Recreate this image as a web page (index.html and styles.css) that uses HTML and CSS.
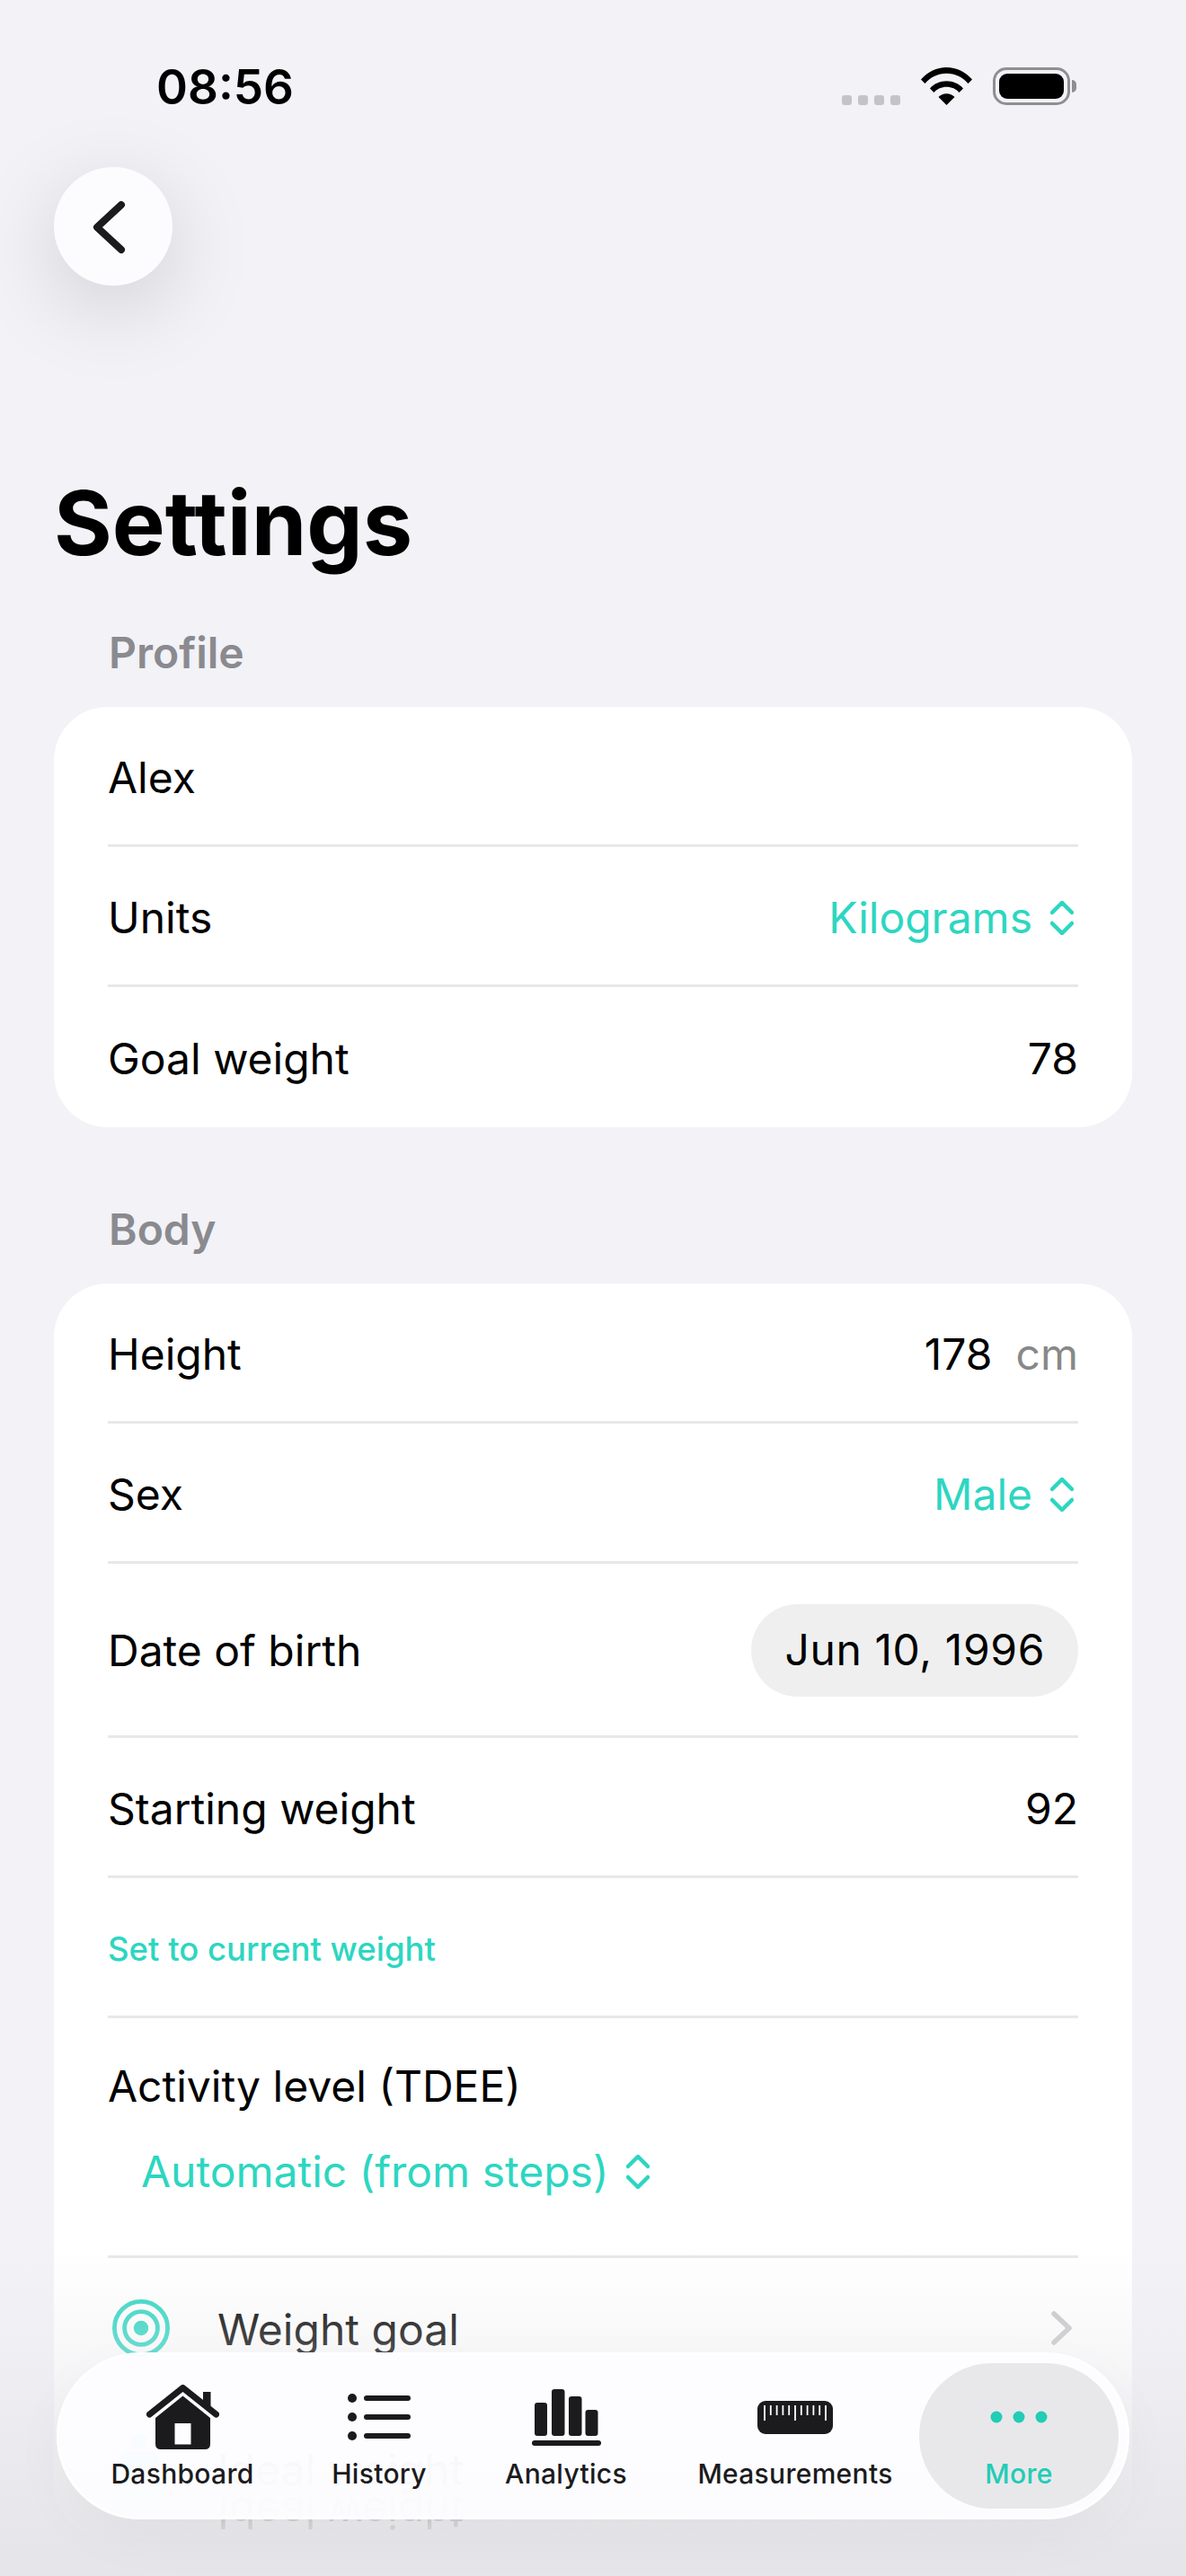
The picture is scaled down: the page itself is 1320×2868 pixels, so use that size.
FILE: index.html
```html
<!DOCTYPE html>
<html lang="en">
    <head>
        <meta charset="utf-8">
        <meta name="viewport" content="width=device-width, initial-scale=1.0">
        <title>Settings</title>
        <link rel="stylesheet" href="styles.css">
    </head>
    <body>
        <div id="screen">
            <header class="status">
                <span class="time">08:56</span>
                <div class="status-icons">
                    <div class="signal"><i></i><i></i><i></i><i></i></div>
                    <svg class="wifi" width="57" height="42" viewBox="0 0 57 42">
                        <path d="M0 13.5C7.5 4.8 17.5 0 28.5 0S49.500 4.800 57 13.500L52.500 18C46.500 10.800 38 6.800 28.500 6.800S10.500 10.800 4.500 18Z"/>
                        <path d="M10 23.500C14.500 18.300 21 15.300 28.500 15.300S42.500 18.300 47 23.500L42.500 28C39 24 34 21.800 28.500 21.800S18 24 14.500 28Z"/>
                        <path d="M19.500 33C21.800 30.500 25 29.200 28.500 29.200S35.200 30.500 37.500 33L28.500 42Z"/>
                    </svg>
                    <div class="battery"><div class="battery-fill"></div></div>
                    <div class="battery-nub"></div>
                </div>
            </header>
            <button class="back" type="button">
                <svg width="40" height="64" viewBox="0 0 40 64"><path d="M33 8L6 33L33 58"/></svg>
            </button>
            <h1>Settings</h1>

            <h2>Profile</h2>
            <section class="card">
                <div class="row"><span>Alex</span></div>
                <div class="row">
                    <span>Units</span>
                    <span class="picker">Kilograms
                        <svg class="updown" width="26" height="38" viewBox="0 0 26 38"><path d="M2 13L13 2L24 13M2 25L13 36L24 25"/></svg>
                    </span>
                </div>
                <div class="row"><span>Goal weight</span><span>78</span></div>
            </section>

            <h2>Body</h2>
            <section class="card">
                <div class="row"><span>Height</span><span>178<span class="unit">cm</span></span></div>
                <div class="row">
                    <span>Sex</span>
                    <span class="picker">Male
                        <svg class="updown" width="26" height="38" viewBox="0 0 26 38"><path d="M2 13L13 2L24 13M2 25L13 36L24 25"/></svg>
                    </span>
                </div>
                <div class="row row-date"><span>Date of birth</span><span class="date-pill">Jun 10, 1996</span></div>
                <div class="row"><span>Starting weight</span><span>92</span></div>
                <div class="row"><span class="link">Set to current weight</span></div>
                <div class="row row-stack">
                    <span>Activity level (TDEE)</span>
                    <span class="picker picker-left">Automatic (from steps)
                        <svg class="updown" width="26" height="38" viewBox="0 0 26 38"><path d="M2 13L13 2L24 13M2 25L13 36L24 25"/></svg>
                    </span>
                </div>
                <div class="row row-nav">
                    <svg class="target" width="64" height="64" viewBox="0 0 66 66">
                        <circle cx="33" cy="33" r="30.500"/>
                        <circle cx="33" cy="33" r="19"/>
                        <circle class="target-dot" cx="33" cy="33" r="8.500"/>
                    </svg>
                    <span class="nav-text">Weight goal</span>
                    <svg class="nav-arrow" width="24" height="38" viewBox="0 0 24 38"><path d="M3 3L20 19L3 35"/></svg>
                </div>
                <div class="row row-nav">
                    <svg class="person" width="66" height="84" viewBox="0 0 66 84">
                        <circle cx="33" cy="10" r="9"/>
                        <path d="M14 22H52L64 62V84H2V62Z"/>
                    </svg>
                    <span class="nav-text nav-reflect">Ideal weight</span>
                </div>
            </section>

            <div class="fade"></div>

            <nav class="tabbar">
                <div class="tab">
                    <div class="tab-icon">
                        <svg width="81" height="72" viewBox="0 0 81 72">
                            <path class="dark" d="M63 8H71.500V24H63Z"/>
                            <path class="roof" d="M3.500 33L40.500 3.500L77.500 33"/>
                            <path class="dark" fill-rule="evenodd" d="M40.500 12.500L71 37V66Q71 72 65 72H16Q10 72 10 66V37ZM31.500 43V66.500H49.500V43Z"/>
                        </svg>
                    </div>
                    <span>Dashboard</span>
                </div>
                <div class="tab">
                    <div class="tab-icon">
                        <svg width="70" height="52" viewBox="0 0 70 52">
                            <circle class="dark" cx="5" cy="5" r="5"/>
                            <circle class="dark" cx="5" cy="26" r="5"/>
                            <circle class="dark" cx="5" cy="47" r="5"/>
                            <path class="lines" d="M21 5H67M21 26H67M21 47H67"/>
                        </svg>
                    </div>
                    <span>History</span>
                </div>
                <div class="tab">
                    <div class="tab-icon">
                        <svg width="77" height="63" viewBox="0 0 77 63">
                            <rect class="dark" x="3" y="15" width="14" height="37" rx="3"/>
                            <rect class="dark" x="22" y="0" width="14.500" height="52" rx="3"/>
                            <rect class="dark" x="41" y="8" width="14.500" height="44" rx="3"/>
                            <rect class="dark" x="59.500" y="23" width="14" height="29" rx="3"/>
                            <rect class="dark" x="0" y="57" width="77" height="6" rx="3"/>
                        </svg>
                    </div>
                    <span>Analytics</span>
                </div>
                <div class="tab">
                    <div class="tab-icon">
                        <svg width="84" height="37" viewBox="0 0 84 37">
                            <rect class="dark" width="84" height="37" rx="9"/>
                            <path class="ticks" d="M8 5V22M14.800 5V16M21.600 5V16M28.400 5V16M35.200 5V16M42 5V22M48.800 5V16M55.600 5V16M62.400 5V16M69.200 5V16M76 5V22"/>
                        </svg>
                    </div>
                    <span>Measurements</span>
                </div>
                <div class="tab tab-active">
                    <div class="tab-icon">
                        <svg width="64" height="14" viewBox="0 0 64 14">
                            <circle cx="7" cy="7" r="6.500"/>
                            <circle cx="32" cy="7" r="6.500"/>
                            <circle cx="57" cy="7" r="6.500"/>
                        </svg>
                    </div>
                    <span>More</span>
                </div>
            </nav>
        </div>
    </body>
</html>
```

FILE: styles.css
```css
:root{
    --teal: #2dd6c1;
    --bg: #f2f2f7;
    --ink: #1b1b1d;
}
*{
    margin: 0;
    padding: 0;
    box-sizing: border-box;
}
body{
    background-color: var(--bg);
    font-family: Inter, "Liberation Sans", sans-serif;
    color: #000;
}
#screen{
    position: relative;
    width: 1320px;
    height: 2868px;
    overflow: hidden;
}

/* status bar */
.status{
    display: flex;
    justify-content: space-between;
    align-items: flex-start;
    height: 186px;
    padding: 64px 122px 0 174px;
}
.time{
    font-size: 53px;
    line-height: 66px;
    font-weight: 600;
}
.status-icons{
    display: flex;
    align-items: flex-end;
    margin-top: 11px;
}
.signal{
    display: flex;
    gap: 7px;
    margin-right: 23px;
}
.signal i{
    display: block;
    width: 11px;
    height: 11px;
    border-radius: 3px;
    background-color: #c4c4c8;
}
.wifi{
    margin-right: 23px;
}
.battery{
    width: 86px;
    height: 42px;
    padding: 4px;
    border: 3px solid #8e8e93;
    border-radius: 15px;
}
.battery-fill{
    height: 100%;
    border-radius: 9px;
    background-color: #000;
}
.battery-nub{
    width: 5px;
    height: 14px;
    margin: 0 0 14px 2px;
    border-radius: 0 5px 5px 0;
    background-color: #8e8e93;
}

/* header */
.back{
    display: flex;
    justify-content: center;
    align-items: center;
    width: 132px;
    height: 132px;
    margin-left: 60px;
    border: none;
    border-radius: 50%;
    background-color: #fcfcfe;
    box-shadow: 0 24px 96px rgba(0,0,0,.15);
}
.back svg{
    margin-right: 8px;
}
.back path{
    fill: none;
    stroke: var(--ink);
    stroke-width: 8;
    stroke-linecap: round;
    stroke-linejoin: round;
}
h1{
    margin-left: 60px;
    padding-top: 202px;
    font-size: 99px;
    line-height: 124px;
    font-weight: 700;
}
h2{
    margin: 54px 0 0 121px;
    font-size: 48px;
    line-height: 58px;
    font-weight: 600;
    color: #8a8a8f;
}

/* cards and rows */
.card{
    margin: 31px 60px 0;
    padding: 0 60px;
    border-radius: 60px;
    background-color: #fff;
}
.card + h2{
    margin-top: 85px;
}
.row{
    display: flex;
    justify-content: space-between;
    align-items: center;
    height: 156px;
    padding-top: 4px;
    border-bottom: 3px solid #e8e8e8;
    font-size: 48px;
    line-height: 62px;
}
.row:last-child{
    border-bottom: none;
}
.row-date{
    height: 194px;
    padding-top: 2px;
}
.row-stack{
    flex-direction: column;
    justify-content: flex-start;
    align-items: flex-start;
    height: 267px;
    padding-top: 45px;
}
.row-nav{
    justify-content: flex-start;
    border-bottom: none;
}
.picker{
    display: flex;
    align-items: center;
    gap: 20px;
    margin-right: 5px;
    color: var(--teal);
}
.picker-left{
    margin: 33px 0 0 37px;
}
.updown{
    flex: none;
}
.updown path{
    fill: none;
    stroke: var(--teal);
    stroke-width: 4.500;
    stroke-linecap: round;
    stroke-linejoin: round;
}
.unit{
    margin-left: 26px;
    color: #888;
}
.date-pill{
    padding: 20px 37px 21px;
    border-radius: 52px;
    background-color: #efefef;
    letter-spacing: .6px;
}
.link{
    font-size: 36.500px;
    font-weight: 500;
    color: var(--teal);
}
.target{
    flex: none;
    margin: 0 0 4px 5px;
}
.target circle{
    fill: none;
    stroke: var(--teal);
    stroke-width: 5;
}
.target .target-dot{
    fill: var(--teal);
    stroke: none;
}
.nav-text{
    margin-left: 53px;
}
/* the row shows mirrored in the glass of the tab bar */
.nav-reflect{
    display: inline-block;
    -webkit-box-reflect: below -14px;
}
.nav-arrow{
    margin: 0 6px 4px auto;
}
.nav-arrow path{
    fill: none;
    stroke: #c7c7c9;
    stroke-width: 5.500;
    stroke-linecap: round;
    stroke-linejoin: round;
}
.person{
    flex: none;
    margin-left: 2px;
}
.person circle,
.person path{
    fill: #2dd6c1;
}
.person + .nav-text{
    margin-left: 54px;
}

/* fade under the tab bar */
.fade{
    position: absolute;
    left: 0;
    right: 0;
    top: 2500px;
    bottom: 0;
    background: linear-gradient(to bottom, rgba(232,232,236,0) 0, rgba(232,232,236,.3) 110px, rgba(230,230,234,1) 340px);
}

/* tab bar */
.tabbar{
    position: absolute;
    left: 63px;
    bottom: 63px;
    display: grid;
    grid-template-columns: 256px 182px 234px 276px 222px;
    width: 1194px;
    height: 186px;
    padding: 12px;
    border-radius: 93px;
    background-color: rgba(253,253,255,.95);
    box-shadow: 0 20px 60px rgba(0,0,0,.04), inset 0 0 0 3px rgba(255,255,255,.6);
}
.tab{
    display: flex;
    flex-direction: column;
    align-items: center;
    padding-top: 24px;
    border-radius: 81px;
    font-size: 30px;
    line-height: 36px;
    font-weight: 500;
    letter-spacing: .3px;
    color: var(--ink);
}
.tab-icon{
    display: flex;
    justify-content: center;
    align-items: center;
    height: 72px;
    margin-bottom: 9px;
}
.tab-active{
    background-color: #e8e8eb;
    color: #22ccb5;
}
.tab-active circle{
    fill: #22ccb5;
}
.dark{
    fill: var(--ink);
}
.roof{
    fill: none;
    stroke: var(--ink);
    stroke-width: 7;
    stroke-linecap: round;
    stroke-linejoin: round;
}
.lines{
    fill: none;
    stroke: var(--ink);
    stroke-width: 6;
    stroke-linecap: round;
}
.ticks{
    fill: none;
    stroke: #fff;
    stroke-width: 1.800;
}
```
